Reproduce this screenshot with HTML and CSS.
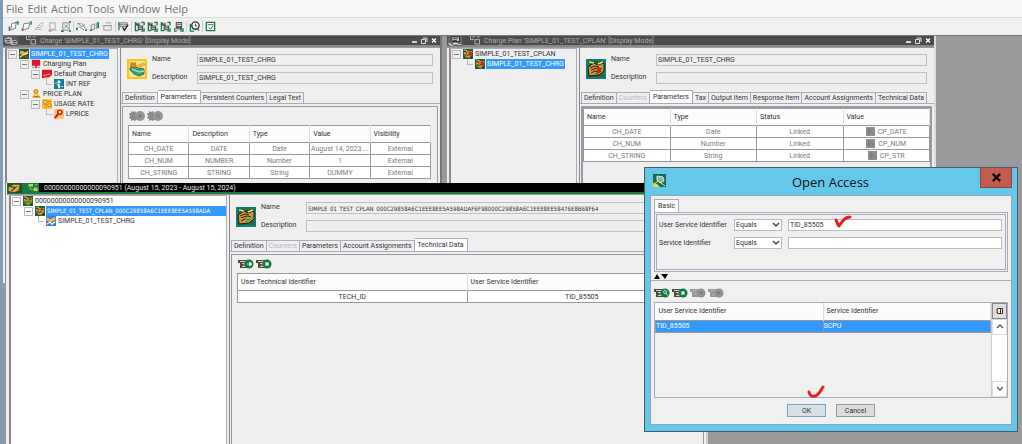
FILE: index.html
```html
<!DOCTYPE html>
<html lang="en">
<head>
<meta charset="utf-8">
<title>Open Access</title>
<link rel="stylesheet" href="styles.css">
</head>
<body>
<svg class="defs" aria-hidden="true">
  <symbol id="page" viewBox="0 0 12 12"><path d="M4 3 9 1.500 8 8 3 10Z" fill="#f5f5f5" stroke="#777" stroke-width="1"/></symbol>
  <symbol id="t1" viewBox="0 0 12 12"><use href="#page"/><path d="M1.500 11V6M8 2l3-1v3" stroke="#21824f" stroke-width="1.500" fill="none"/></symbol>
  <symbol id="t2" viewBox="0 0 12 12"><path d="M3 3 10 2 8 8 2 10Z" fill="#fafafa" stroke="#777"/><path d="M1.500 11V8M10 1h1v3" stroke="#21824f" stroke-width="1.500" fill="none"/></symbol>
  <symbol id="t3" viewBox="0 0 12 12"><path d="M1 10l2-3h4l3-3M4 6l3-3 3-1M2 9h6" stroke="#aaa" fill="none"/></symbol>
  <symbol id="t4" viewBox="0 0 12 12"><path d="M3 2h6v7H3zM1 10h10" stroke="#aaa" fill="#eee"/><path d="M2 11h3" stroke="#777"/></symbol>
  <symbol id="t5" viewBox="0 0 12 12"><path d="M3 2h7v8H3zM5 4l4 4M8 4 5 8" stroke="#888" fill="#eee"/><path d="M1 11h3M10 11h2M10 1h2" stroke="#21824f" stroke-width="2"/></symbol>
  <symbol id="t6" viewBox="0 0 12 12"><path d="M2 2l4 4 4-2M3 6l6 4M6 2l4 6M1 3h4" stroke="#888" fill="none"/><path d="M1 10V7M10 10h2" stroke="#21824f" stroke-width="2"/></symbol>
  <symbol id="t7" viewBox="0 0 12 12"><path d="M2 5l4-2v6l-3 1zM8 2v7" stroke="#888" fill="#eee"/><path d="M10 1v7M1 10h2" stroke="#21824f" stroke-width="2"/></symbol>
  <symbol id="t8" viewBox="0 0 12 12"><path d="M2 5h8v5H2zM4 2h6M1 5h10" stroke="#999" fill="#eee"/></symbol>
  <symbol id="t9" viewBox="0 0 12 12"><path d="M2 2h8v4H2zM2 4h8" stroke="#777" fill="#ddd"/><path d="M1 1v9" stroke="#21824f" stroke-width="1.500"/><path d="M5 7l2 3 4-6" stroke="#222" stroke-width="1.500" fill="none"/></symbol>
  <symbol id="t10" viewBox="0 0 12 12"><path d="M2 2h4v3H2zM4 5h6v5H4z" fill="#3d3d3d"/><path d="M3 3h2M5 6.500h4M5 8.500h4M8 2v3M7 3h4" stroke="#ddd"/><path d="M1.500 1v9.500h3M8 1.500h3v3M11 8v3H8" stroke="#168247" stroke-width="1.500" fill="none"/></symbol>
  <symbol id="t11" viewBox="0 0 12 12"><path d="M3 1h7v7H3zM1 8h9v2H1z" fill="#555"/><path d="M4 3h5M4 5h5M2 9h6" stroke="#eee"/><path d="M1 11h3M11 8v3H8" stroke="#168247" stroke-width="1.500" fill="none"/></symbol>
  <symbol id="t12" viewBox="0 0 12 12"><path d="M1.500 3v8h4" stroke="#168247" stroke-width="1.500" fill="none"/><circle cx="7" cy="5" r="4" fill="#fff" stroke="#333" stroke-width="1.500"/><path d="M7 3v2.500h2M9 8l2 3" stroke="#333" fill="none"/></symbol>
  <symbol id="t13" viewBox="0 0 12 12"><path d="M1.500 1.500h9v9h-9z" fill="#fff" stroke="#168247" stroke-width="1.500"/><path d="M3 4h6M4 7l2 2 3-4" stroke="#555" fill="none"/></symbol>

  <symbol id="board" viewBox="0 0 12 12"><path d="M0 0h12v12H0z" fill="#27602f"/><path d="M1 4l4-2 3 1 3-1v5l-4 4-5-2z" fill="#c79339"/><path d="M2 2l3 3M5 8l3-2M2 9l2-3M9 10h2M7 4h3" stroke="#1b1b10"/><path d="M1 1l4 1" stroke="#e0cf4a"/></symbol>
  <symbol id="n-charge" viewBox="0 0 12 12"><path d="M0 0h12v12H0z" fill="#285b32"/><path d="M1 3l3-1 3 2 4-2v3l-6 2-4-1z" fill="#ecae3a"/><path d="M1 10l4-3 6-2" stroke="#e8e1a0" stroke-width="1.500" fill="none"/><path d="M7 8l3 2" stroke="#d23a1d" stroke-width="2"/></symbol>
  <symbol id="n-plan" viewBox="0 0 12 12"><use href="#board"/><circle cx="9" cy="6" r="2" fill="#d61b1b"/></symbol>
  <symbol id="n-ok" viewBox="0 0 12 12"><use href="#board"/><path d="M5 8l2 2 4-6" stroke="#42b549" stroke-width="1.500" fill="none"/></symbol>
  <symbol id="n-red" viewBox="0 0 12 12"><path d="M1 1h10v7H7v3H5V8H1z" fill="#d9182c"/><path d="M1 10h3M8 10h3" stroke="#8f7580"/></symbol>
  <symbol id="n-red2" viewBox="0 0 12 12"><path d="M0 1h12v6l-3 3-9 1z" fill="#d9182c"/><path d="M1 8l9-2M2 11h8" stroke="#f6c0ad"/></symbol>
  <symbol id="n-int" viewBox="0 0 12 12"><path d="M0 0h12v12H0z" fill="#187d9b"/><circle cx="6" cy="3.500" r="2" fill="#fff"/><path d="M6 6v5M4 7h3" stroke="#fff" stroke-width="2"/><path d="M1 5h3M8 9h3" stroke="#bfe2ec"/></symbol>
  <symbol id="n-price" viewBox="0 0 12 12"><circle cx="6" cy="3" r="2.500" fill="#f2b42e" stroke="#c67a18"/><path d="M6 5 2 10h9L7 5" fill="#ffd44c" stroke="#d98d1c"/><path d="M4 9h5" stroke="#b45414"/></symbol>
  <symbol id="n-rate" viewBox="0 0 12 12"><path d="M0 0h12v12H0z" fill="#ffc32b"/><path d="M2 2h4v3H2zM7 3h4M2 7h4M7 6h4v3H7zM3 10h3" fill="#fff0a0" stroke="#bd6a12"/></symbol>
  <symbol id="n-l" viewBox="0 0 12 12"><path d="M0 0h12v12H0z" fill="#ffc66d"/><circle cx="7" cy="4" r="2.500" fill="#fff" stroke="#cc231a" stroke-width="2"/><path d="M5 6l-4 5" stroke="#cc231a" stroke-width="2.500"/></symbol>
  <symbol id="n-blue" viewBox="0 0 12 12"><path d="M0 0h12v12H0z" fill="#3b7fd0"/><path d="M0 1l5 3 6-3v4l-4 2-6-1z" fill="#f7b24a"/><path d="M1 10l4-3 2 3 4-3" stroke="#e8f5ff" stroke-width="1.500" fill="none"/></symbol>

  <symbol id="big-charge" viewBox="0 0 20 20"><path d="M1 1h18v18H1z" fill="#f3e79c" stroke="#ffc20e" stroke-width="2"/><path d="M3 9l4-1 10 2v5l-5 2-5-2-4-4z" fill="#3e9c77" stroke="#2c775c"/><path d="M5 10l7 3 5-1" stroke="#a5d9c0" stroke-width="1.500" fill="none"/><path d="M3 3h6v5H3z" fill="#efa726"/><path d="M3 5h6M3 7h6" stroke="#b86711"/><path d="M9 7l8-3 1 2-7 3z" fill="#f2bd36" stroke="#c8821a" stroke-width=".5"/></symbol>
  <symbol id="big-plan" viewBox="0 0 20 20"><path d="M1 1h18v18H1z" fill="#2a6346" stroke="#127b72" stroke-width="2"/><path d="M2 8l6-4 4 2 6-2v8l-5 4-10 1z" fill="#cf9440" stroke="#1d1c0c"/><path d="M4 9l5-2 4 1M5 11l6-2 5 1M5 14l4-2 4 1M10 15l5-3" stroke="#33270f" fill="none"/><path d="M3 3l5 1M12 5l5-2" stroke="#efe15a" stroke-width="1.500"/></symbol>
  <symbol id="big-mark" viewBox="0 0 20 20"><use href="#big-plan"/><path d="M13 8l2 3-2 3-2-3z" fill="#d92018"/></symbol>
  <symbol id="big-ok" viewBox="0 0 20 20"><use href="#big-plan"/><path d="M10 12l2 3 4-6" stroke="#4fc24c" stroke-width="1.500" fill="none"/></symbol>

  <symbol id="gear" viewBox="0 0 16 10"><path d="M0 2h2l0-2 2 1 2-1 1 2h3v6l-3 1-1 1-2-1-2 1V8L0 7l1-2z" fill="#8a8a8a"/><circle cx="11" cy="5" r="5" fill="#959595"/></symbol>
  <symbol id="gear-add" viewBox="0 0 16 10"><use href="#gear"/><path d="M11 2.500v5M8.500 5h5" stroke="#777"/></symbol>
  <symbol id="gear-del" viewBox="0 0 16 10"><use href="#gear"/><path d="M9 3l4 4M13 3 9 7" stroke="#777"/></symbol>
  <symbol id="rows" viewBox="0 0 16 10"><path d="M0 1h10v8H2V4H0z" fill="#4a4a45"/><path d="M2 2.500h7M4 4.500h4M4 7.500h4" stroke="#d8d2b6"/><path d="M5 6h2" stroke="#e0a030"/><circle cx="11" cy="5" r="4.500" fill="#137742"/></symbol>
  <symbol id="rows-go" viewBox="0 0 16 10"><use href="#rows"/><path d="M9 5h3M11.500 3l2.500 2-2.500 2z" stroke="#fff" fill="#fff" stroke-width=".8"/></symbol>
  <symbol id="rows-del" viewBox="0 0 16 10"><use href="#rows"/><path d="M9.500 3.500l3 3M12.500 3.500l-3 3" stroke="#fff" stroke-width="1.500"/></symbol>
  <symbol id="rows-find" viewBox="0 0 16 10"><use href="#rows"/><circle cx="11" cy="4" r="1.500" stroke="#b9dbc8" fill="none"/><path d="M12 5l1.500 2.500" stroke="#b9dbc8"/></symbol>
  <symbol id="rows-off" viewBox="0 0 16 10"><path d="M0 1h10v8H2V4H0z" fill="#999"/><path d="M3 2.500h5M4 6h4" stroke="#b5b5b5"/><circle cx="11" cy="5" r="4.500" fill="#929292"/></symbol>
  <symbol id="rows-prev" viewBox="0 0 16 10"><use href="#rows-off"/><path d="M12.500 3v4l-3-2z" fill="#777"/></symbol>
  <symbol id="rows-next" viewBox="0 0 16 10"><use href="#rows-off"/><path d="M9.500 3v4l3-2z" fill="#777"/></symbol>

  <symbol id="win-gray" viewBox="0 0 16 11"><path d="M0 0h16v11H0z" fill="#5a5a5a"/><path d="M1 3l4-2 4 1v3l4-1 2 2v3l-3 1H9L7 8H3L1 6z" fill="#bbb"/><path d="M2 4h5M3 6h4M10 6h4M10 8h4" stroke="#333"/></symbol>
  <symbol id="win-gray2" viewBox="0 0 16 11"><path d="M0 0h16v11H0z" fill="#666"/><path d="M3 1h10v5H5z" fill="#ccc" stroke="#222"/><path d="M1 8l3 2 4-2 4 1h3" stroke="#ddd" fill="none" stroke-width="1.500"/><path d="M5 3h6M6 5h4M4 9h2M12 8h2" stroke="#333"/></symbol>
  <symbol id="win-live" viewBox="0 0 16 11"><path d="M0 0h16v11H0z" fill="#26512b"/><path d="M1 5l5-3h7l-1 6-4 2-7-1z" fill="#d9a545"/><path d="M3 4l5 1M5 8l5-4M4 9l3-3" stroke="#20220f"/></symbol>
  <symbol id="tree-mark" viewBox="0 0 12 10"><path d="M1 0v4h4M3 1h3M6 4h5v5H6zM8 1h3" fill="none" stroke="#bbb"/></symbol>
  <symbol id="tree-green" viewBox="0 0 12 10"><path d="M1 1h5v3H1zM7 5h4v4H7z" fill="#b7d54a"/><path d="M3 4v3h4M8 2h3" stroke="#6edb7d" fill="none"/></symbol>
  <symbol id="ctl" viewBox="0 0 31 9"><path d="M3 6h5" stroke="#fff" stroke-width="1.500"/><path d="M12.500 3.500h4v4h-4zM14 2h4v4" fill="none" stroke="#ddd"/><path d="M23 2.500l4 4M27 2.500l-4 4" stroke="#fff" stroke-width="1.300"/></symbol>
  <symbol id="link" viewBox="0 0 10 10"><path d="M0 0h10v10H0z" fill="#8f8f8f"/><path d="M3 2v6l3-3 3 2M3 2l3 3" stroke="#707070" fill="none"/></symbol>
  <symbol id="app" viewBox="0 0 13 13"><path d="M0 0h13v13H0z" fill="#176c4d"/><path d="M4 2l6 1 1 4-4 2-3-3zM1 10l4-3M8 9l4 3" fill="#86baa1" stroke="#d5e6dc"/><path d="M0 9l4 1 3 3H0z" fill="#f1d53b"/></symbol>
</svg>

<div class="app">
  <nav class="menu">
    <a href="#">File</a><a href="#">Edit</a><a href="#">Action</a><a href="#">Tools</a><a href="#">Window</a><a href="#">Help</a>
  </nav>
  <div class="toolbar">
    <button aria-label="New"><svg><use href="#t1"/></svg></button>
    <button aria-label="Open"><svg><use href="#t2"/></svg></button>
    <button aria-label="Edit"><svg><use href="#t3"/></svg></button>
    <button aria-label="Save"><svg><use href="#t4"/></svg></button>
    <button aria-label="Delete"><svg><use href="#t5"/></svg></button>
    <button aria-label="Cut" class="sep"><svg><use href="#t6"/></svg></button>
    <button aria-label="Copy"><svg><use href="#t7"/></svg></button>
    <button aria-label="Paste"><svg><use href="#t8"/></svg></button>
    <button aria-label="Validate" class="sep"><svg><use href="#t9"/></svg></button>
    <button aria-label="Charge" class="sep"><svg><use href="#t10"/></svg></button>
    <button aria-label="Charge plan"><svg><use href="#t10"/></svg></button>
    <button aria-label="Contract"><svg><use href="#t10"/></svg></button>
    <button aria-label="List"><svg><use href="#t11"/></svg></button>
    <button aria-label="History" class="sep"><svg><use href="#t12"/></svg></button>
    <button aria-label="Tasks" class="sep"><svg><use href="#t13"/></svg></button>
  </div>

  <main class="desktop">
    <section class="window win-charge">
      <header class="title"><svg class="ti"><use href="#win-gray"/></svg><svg class="tm"><use href="#tree-mark"/></svg><span>Charge 'SIMPLE_01_TEST_CHRG' [Display Mode]</span><svg class="ctl"><use href="#ctl"/></svg></header>
      <div class="body">
        <ul class="tree">
          <li class="l0"><i class="box"></i><svg><use href="#n-charge"/></svg><span class="sel">SIMPLE_01_TEST_CHRG</span></li>
          <li class="l1"><i class="box"></i><svg><use href="#n-red"/></svg><span>Charging Plan</span></li>
          <li class="l2"><i class="box"></i><svg><use href="#n-red2"/></svg><span>Default Charging</span></li>
          <li class="l3"><i class="elbow"></i><svg><use href="#n-int"/></svg><span>INT REF</span></li>
          <li class="l1"><i class="box"></i><svg><use href="#n-price"/></svg><span>PRICE PLAN</span></li>
          <li class="l2"><i class="box"></i><svg><use href="#n-rate"/></svg><span>USAGE RATE</span></li>
          <li class="l3"><i class="elbow"></i><svg><use href="#n-l"/></svg><span>LPRICE</span></li>
        </ul>
        <div class="detail">
          <div class="head">
            <svg class="big"><use href="#big-charge"/></svg>
            <div class="fields">
              <label for="a1">Name</label><input id="a1" readonly value="SIMPLE_01_TEST_CHRG">
              <label for="a2">Description</label><input id="a2" readonly value="SIMPLE_01_TEST_CHRG">
            </div>
          </div>
          <div class="tabs"><button>Definition</button><button class="on">Parameters</button><button>Persistent Counters</button><button>Legal Text</button></div>
          <div class="pane padded">
            <div class="tools"><svg><use href="#gear-add"/></svg><svg><use href="#gear-del"/></svg></div>
            <table class="grid dim">
              <thead><tr><th>Name</th><th>Description</th><th>Type</th><th>Value</th><th>Visibility</th></tr></thead>
              <tbody>
                <tr><td>CH_DATE</td><td>DATE</td><td>Date</td><td>August 14, 2023 ...</td><td>External</td></tr>
                <tr><td>CH_NUM</td><td>NUMBER</td><td>Number</td><td>1</td><td>External</td></tr>
                <tr><td>CH_STRING</td><td>STRING</td><td>String</td><td>DUMMY</td><td>External</td></tr>
              </tbody>
            </table>
          </div>
        </div>
      </div>
    </section>

    <section class="window win-plan">
      <header class="title"><svg class="ti"><use href="#win-gray2"/></svg><svg class="tm"><use href="#tree-mark"/></svg><span>Charge Plan 'SIMPLE_01_TEST_CPLAN' [Display Mode]</span><svg class="ctl"><use href="#ctl"/></svg></header>
      <div class="body">
        <ul class="tree">
          <li class="l0"><i class="box"></i><svg><use href="#n-plan"/></svg><span>SIMPLE_01_TEST_CPLAN</span></li>
          <li class="l1"><i class="elbow"></i><svg><use href="#n-plan"/></svg><span class="sel">SIMPLE_01_TEST_CHRG</span></li>
        </ul>
        <div class="detail">
          <div class="head">
            <svg class="big"><use href="#big-mark"/></svg>
            <div class="fields">
              <label for="b1">Name</label><input id="b1" readonly value="SIMPLE_01_TEST_CHRG">
              <label for="b2">Description</label><input id="b2" readonly value="">
            </div>
          </div>
          <div class="tabs"><button>Definition</button><button disabled>Counters</button><button class="on">Parameters</button><button>Tax</button><button>Output Item</button><button>Response Item</button><button>Account Assignments</button><button>Technical Data</button></div>
          <div class="pane">
            <table class="grid dim">
              <thead><tr><th>Name</th><th>Type</th><th>Status</th><th>Value</th></tr></thead>
              <tbody>
                <tr><td>CH_DATE</td><td>Date</td><td>Linked</td><td><div class="linked"><svg><use href="#link"/></svg>CP_DATE</div></td></tr>
                <tr><td>CH_NUM</td><td>Number</td><td>Linked</td><td><div class="linked"><svg><use href="#link"/></svg>CP_NUM</div></td></tr>
                <tr><td>CH_STRING</td><td>String</td><td>Linked</td><td><div class="linked"><svg><use href="#link"/></svg>CP_STR</div></td></tr>
              </tbody>
            </table>
          </div>
        </div>
      </div>
    </section>

    <section class="window win-contract">
      <header class="title"><div class="marks"><svg class="ti"><use href="#win-live"/></svg><svg class="tm"><use href="#tree-green"/></svg></div><span>00000000000000090951 (August 15, 2023 - August 15, 2024)</span></header>
      <div class="body">
        <ul class="tree">
          <li class="l0"><i class="box"></i><svg><use href="#n-ok"/></svg><span>00000000000000090951</span></li>
          <li class="l1"><i class="box"></i><svg><use href="#board"/></svg><span class="sel long">SIMPLE_01_TEST_CPLAN_000C29858A6C1EEE8EE5A598ADA</span></li>
          <li class="l2"><i class="elbow"></i><svg><use href="#n-blue"/></svg><span>SIMPLE_01_TEST_CHRG</span></li>
        </ul>
        <div class="detail">
          <div class="head">
            <svg class="big"><use href="#big-ok"/></svg>
            <div class="fields">
              <label for="c1">Name</label><input id="c1" class="long" readonly value="SIMPLE_01_TEST_CPLAN_000C29858A6C1EEE8EE5A598ADAF6F98000C29858A6C1EEE8EE58476E8B68F64">
              <label for="c2">Description</label><input id="c2" readonly value="">
            </div>
          </div>
          <div class="tabs"><button>Definition</button><button disabled>Counters</button><button>Parameters</button><button>Account Assignments</button><button class="on">Technical Data</button></div>
          <div class="pane padded">
            <div class="tools"><svg><use href="#rows-go"/></svg><svg><use href="#rows-del"/></svg></div>
            <table class="grid">
              <thead><tr><th>User Technical Identifier</th><th>User Service Identifier</th></tr></thead>
              <tbody><tr><td>TECH_ID</td><td>TID_85505</td></tr></tbody>
            </table>
          </div>
        </div>
      </div>
    </section>

    <section class="dialog" role="dialog" aria-labelledby="dlg">
      <header class="dlg-title"><svg class="app-icon"><use href="#app"/></svg><h1 id="dlg">Open Access</h1><button class="close" aria-label="Close"><svg viewBox="0 0 12 12"><path d="M2 2l8 8M10 2l-8 8" stroke="#000" stroke-width="2.500"/></svg></button></header>
      <div class="dlg-body">
        <div class="search">
          <div class="tabs"><button class="on">Basic</button></div>
          <div class="criteria">
            <div class="inner">
              <label for="u">User Service Identifier</label><div class="pick"><select aria-label="User Service operator"><option>Equals</option></select><svg viewBox="0 0 8 6"><path d="M1 1l3 3 3-3" fill="none" stroke="#444" stroke-width="1.500"/></svg></div><div class="entry"><input id="u" value="TID_85505"><svg class="mark" viewBox="0 0 18 14"><path d="M2 5c1 3 2 5 3 6 3-4 5-9 11-9" fill="none" stroke="#e32024" stroke-width="3" stroke-linecap="round" stroke-linejoin="round"/></svg></div>
              <label for="s">Service Identifier</label><div class="pick"><select aria-label="Service operator"><option>Equals</option></select><svg viewBox="0 0 8 6"><path d="M1 1l3 3 3-3" fill="none" stroke="#444" stroke-width="1.500"/></svg></div><div class="entry"><input id="s" value=""></div>
            </div>
          </div>
        </div>
        <div class="split"><svg viewBox="0 0 14 5"><path d="M0 5l3-5 3 5zM7 0h7l-3 5z" fill="#000"/></svg></div>
        <div class="results">
          <div class="tools"><svg><use href="#rows-find"/></svg><svg><use href="#rows-del"/></svg><svg><use href="#rows-prev"/></svg><svg><use href="#rows-next"/></svg></div>
          <div class="list">
            <table class="grid">
              <thead><tr><th>User Service Identifier</th><th>Service Identifier</th></tr></thead>
              <tbody><tr class="picked"><td>TID_85505</td><td>SCPU</td></tr></tbody>
            </table>
            <div class="scroll">
              <button class="cols" aria-label="Columns"><svg viewBox="0 0 8 8"><path d="M1.500 1.500h5v5h-5zM4.500 1v6" fill="#fff" stroke="#333"/><path d="M0 2l3 2-3 2z" fill="#d97a1a"/></svg></button>
              <button aria-label="Up"><svg viewBox="0 0 8 8"><path d="M1 5l3-3 3 3" fill="none" stroke="#555" stroke-width="1.300"/></svg></button>
              <div class="track"></div>
              <button aria-label="Down"><svg viewBox="0 0 8 8"><path d="M1 2l3 3 3-3" fill="none" stroke="#555" stroke-width="1.300"/></svg></button>
            </div>
          </div>
        </div>
        <footer class="actions"><div class="okwrap"><button class="ok">OK</button><svg class="mark" viewBox="0 0 18 14"><path d="M2 7c1 5 5 5 8 3 3-2 4-5 6-8" fill="none" stroke="#e32024" stroke-width="3" stroke-linecap="round"/></svg></div><button>Cancel</button></footer>
      </div>
    </section>
  </main>
</div>
</body>
</html>
```
FILE: styles.css
```css
* { box-sizing: border-box; }
body { margin: 0; color: #333; font: 7px/10px Roboto, "Noto Sans", sans-serif; }
.defs { position: absolute; width: 0; height: 0; }
button, input, select { font: inherit; color: inherit; margin: 0; padding: 0; border-radius: 0; }
button { border: 0; background: none; }
svg { display: block; flex: none; }

.app { display: flex; flex-direction: column; height: 100vh; border-left: 3px solid #7f9cb8; background: #f0f0f0; overflow: hidden; }
.menu { display: flex; gap: 4px; height: 17px; padding-left: 3px; background: #f7f7f8; font: 11px/17px "Open Sans", sans-serif; }
.menu a { color: #737373; text-decoration: none; }
.toolbar { display: flex; align-items: center; height: 18px; padding-left: 5px; border-top: 1px solid #ddd; }
.toolbar button { width: 13px; }
.toolbar svg { width: 11px; height: 11px; }
.toolbar .sep { width: 16px; padding-left: 2px; border-left: 1px solid #ccc; }

.desktop { position: relative; flex: 1; border-top: 1px solid #777; background: #999; overflow: hidden; }
.window { position: absolute; display: flex; flex-direction: column; background: #efefef; }
.win-charge { left: 0; top: 0; width: 439px; height: 247px; border-right: 2px solid #777; }
.win-plan { left: 444px; top: 0; width: 489px; height: 220px; border-right: 2px solid #ddd; }
.win-contract { left: 4px; top: 147px; width: 701px; bottom: 0; border-right: 2px solid #ccc; box-shadow: -1px 0 #eee; }

.title { display: flex; align-items: center; height: 11px; border-bottom: 2px solid #888; background: #4c4c4c; color: #aaa; flex: none; }
.title .ti { width: 16px; height: 10px; }
.title .tm { width: 12px; height: 9px; margin: 0 3px 0 6px; }
.title .ctl { width: 31px; height: 9px; margin-left: auto; }
.win-contract .title { background: #000; border-bottom: 2px solid #1c7a42; color: #e8e8e8; }
.marks { display: flex; width: 32px; margin-right: 5px; background: #1c7a42; }
.marks .tm { margin: 0 0 0 4px; }

.body { display: flex; flex: 1; min-height: 0; border-top: 1px solid #999; }
.tree { list-style: none; margin: 0; padding: 0 0 0 1px; border: 1px solid #aab; border-left: 2px solid #888; overflow: hidden; flex: none; }
.win-charge .tree { width: 113px; margin-left: 2px; }
.win-plan .tree { width: 128px; margin-left: 2px; }
.win-contract .tree { width: 218px; margin-left: 2px; background: #fff; border-bottom: 0; }
.tree li { display: flex; align-items: center; height: 10px; white-space: nowrap; }
.tree svg { width: 10px; height: 10px; margin: 0 1px 0 2px; }
.tree span { padding: 0 1px; }
.tree .sel { background: #3399ff; color: #fff; }
.tree .long { flex: 1; }
.long { font: 6px/10px "DejaVu Sans Condensed", "DejaVu Sans", sans-serif; }
.l1 { padding-left: 12px; }
.l2 { padding-left: 23px; }
.l3 { padding-left: 35px; }
.box { width: 9px; height: 9px; border: 1px solid #bbb; background: linear-gradient(#777, #777) center / 5px 1px no-repeat; flex: none; }
.elbow { width: 6px; height: 6px; margin: 0 0 4px 3px; border: solid #bbb; border-width: 0 0 1px 1px; flex: none; }

.detail { display: flex; flex-direction: column; flex: 1; min-width: 0; margin-left: 2px; border-left: 1px solid #888; }
.head { display: flex; gap: 5px; padding: 6px 7px 6px 6px; }
.win-contract .head { padding-top: 7px; }
.big { width: 20px; height: 20px; margin-top: 5px; }
.fields { display: grid; grid-template-columns: 45px 1fr; grid-auto-rows: 12px; row-gap: 6px; align-items: start; flex: 1; }
.fields input { width: 100%; height: 12px; padding: 0 1px; border: 1px solid #c0c0c4; background: #efefef; outline: 0; }

.tabs { display: flex; align-items: flex-end; height: 14px; padding-left: 1px; border-bottom: 1px solid #aab; flex: none; }
.tabs button { height: 11px; padding: 0 2px; border: 1px solid #aab; border-bottom: 0; border-left-width: 0; line-height: 10px; white-space: nowrap; }
.tabs button:first-child { border-left-width: 1px; }
.tabs .on { height: 13px; padding: 0 3px; background: #fff; }
.tabs button:disabled { color: #b8b8b8; }
.pane { flex: 1; margin: 2px 2px 0 1px; border: 2px solid #9a9aa4; border-bottom: 0; }
.padded { padding: 3px 6px 0 5px; border-width: 1px; }
.tools { display: flex; gap: 2px; height: 15px; padding-top: 1px; padding-left: 1px; }
.tools svg { width: 16px; height: 10px; }

.grid { width: 100%; table-layout: fixed; border-collapse: collapse; border: 1px solid #999; background: #fff; }
.grid th { height: 17px; padding: 0 3px; border-right: 1px solid #ddd; background: #fcfcfc; color: #333; font-weight: 400; text-align: left; }
.grid td { height: 12px; padding: 0; border: 1px solid #999; text-align: center; white-space: nowrap; overflow: hidden; }
.dim td { color: #7b7b7b; }
.linked { display: flex; justify-content: center; align-items: center; gap: 3px; }
.linked svg { width: 9px; height: 9px; }

.dialog { position: absolute; left: 641px; top: 131px; width: 374px; display: flex; flex-direction: column; padding: 0 5px 6px; border: 1px solid #40606c; background: #65c8ea; }
.dlg-title { display: flex; height: 27px; }
.app-icon { width: 13px; height: 13px; margin: 6px 0 0 3px; }
h1 { flex: 1; margin: 0; padding-left: 15px; color: #111; font: 400 13px/28px "Open Sans", sans-serif; text-align: center; }
.close { width: 32px; height: 20px; background: #c35b50; border: 1px solid #8d4941; border-top: 0; display: grid; place-items: center; }
.close svg { width: 11px; height: 11px; }
.dlg-body { border: 1px solid #8ab; background: #f0f0f0; }
.search { padding: 3px 3px 0; }
.search .tabs { padding-left: 0; }
.criteria { padding: 1px; border: 1px solid #aab; border-top: 0; }
.inner { display: grid; grid-template-columns: 75px 48px 1fr; grid-auto-rows: 12px; row-gap: 6px; align-items: center; height: 56px; align-content: start; padding: 4px 3px 0 2px; border: 1px solid #aab; white-space: nowrap; }
.pick { position: relative; }
.pick select { width: 100%; height: 12px; padding-left: 1px; appearance: none; border: 1px solid #bbb; background: #fff; display: block; }
.pick svg { position: absolute; right: 2px; top: 3px; width: 8px; height: 6px; }
.entry { position: relative; margin-left: 6px; }
.entry input { display: block; width: 100%; height: 12px; padding: 0 1px; border: 1px solid #bbb; background: #fff; }
.mark { position: absolute; width: 18px; height: 14px; pointer-events: none; }
.entry .mark { left: 46px; top: -4px; }
.split { height: 9px; padding: 2px 3px 0; border-bottom: 1px solid #aaa; }
.split svg { width: 14px; height: 5px; }
.results { padding: 6px 3px 0; }
.results .tools { padding-left: 0; }
.list { display: flex; height: 96px; border: 1px solid #aab; }
.list .grid { flex: 1; align-self: flex-start; border: 0; }
.list .grid td { text-align: left; }
.picked { background: #3399ff; color: #fff; }
.scroll { display: flex; flex-direction: column; width: 16px; border-left: 1px solid #ccc; background: #fff; }
.scroll button { display: grid; place-items: center; height: 16px; border: 1px solid #ddd; }
.scroll svg { width: 8px; height: 8px; }
.scroll .cols { background: #ddd; border-color: #888; }
.track { flex: 1; }
.actions { display: flex; justify-content: center; gap: 10px; padding: 6px 0 7px; }
.actions button { width: 39px; height: 13px; border: 1px solid #999; background: #dcdcdc; line-height: 10px; }
.actions .ok { border-color: #7da2c8; background: #d7e0e6; }
.okwrap { position: relative; }
.okwrap .mark { left: 20px; top: -19px; }
```
